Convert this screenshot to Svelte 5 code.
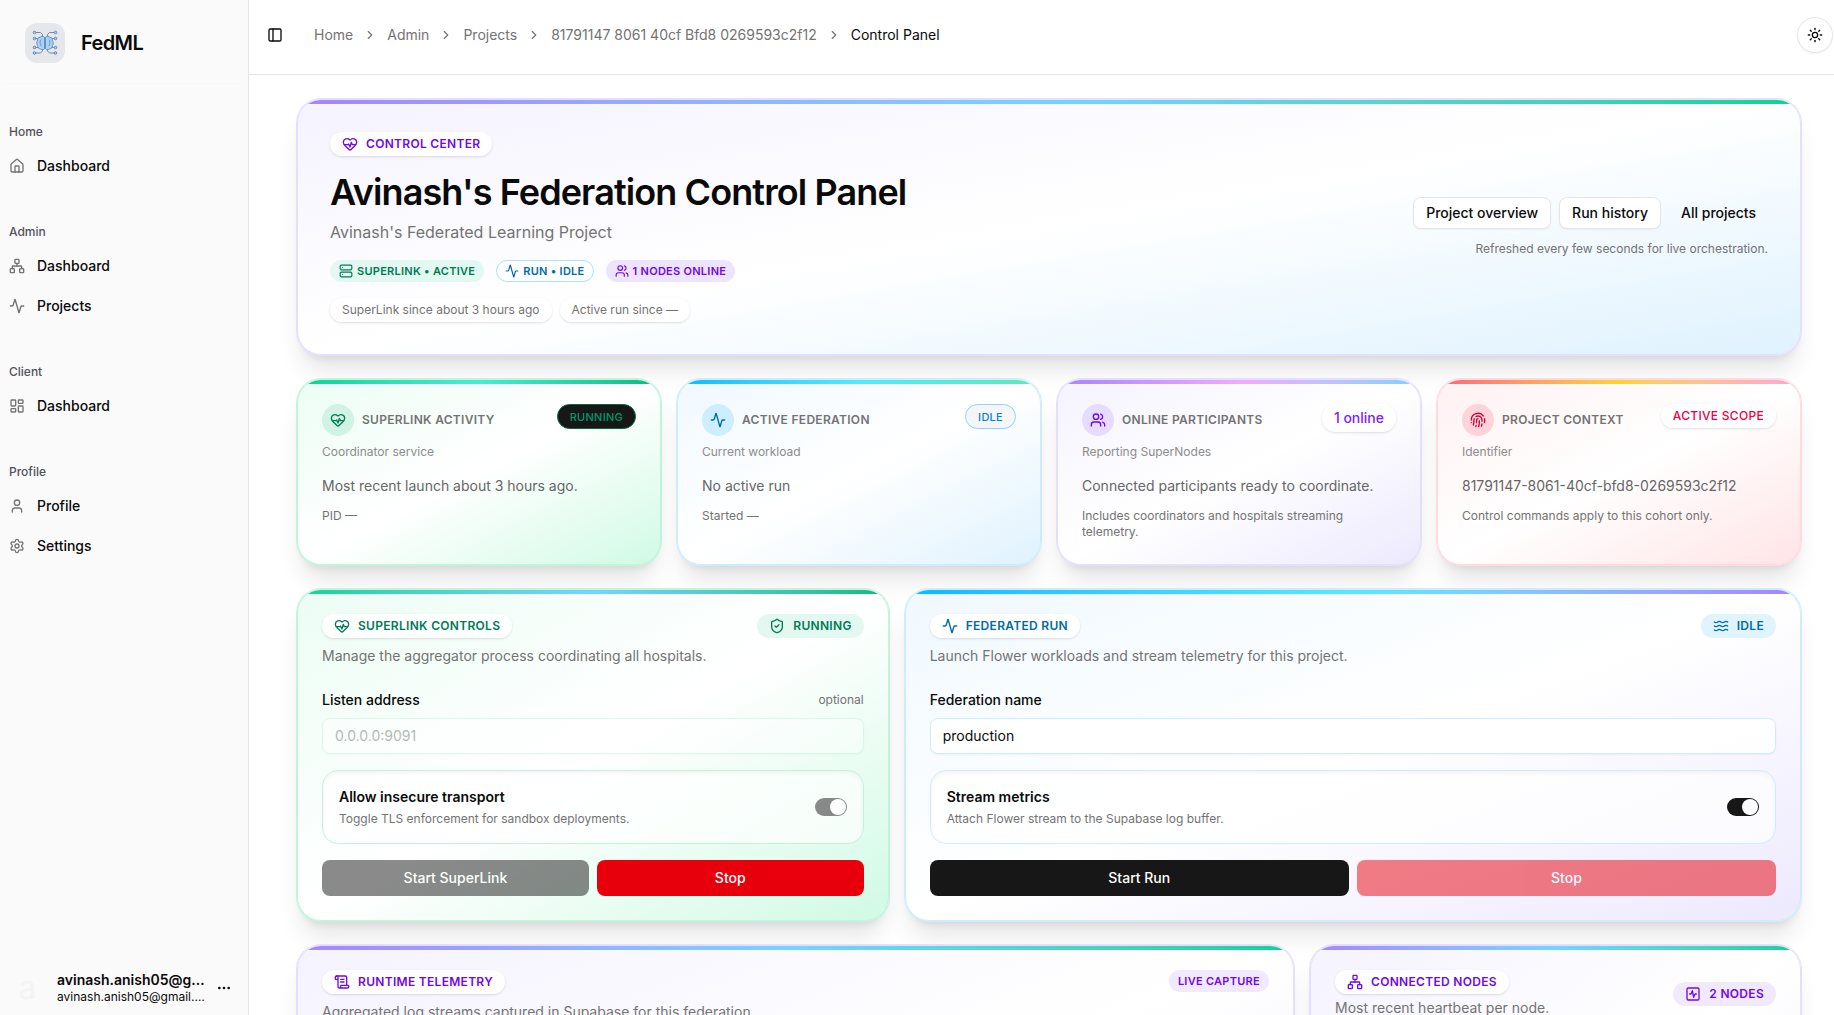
<script>
  const icons = {
    house: ['M15 21v-8a1 1 0 0 0-1-1h-4a1 1 0 0 0-1 1v8', 'M3 10a2 2 0 0 1 .709-1.528l7-6a2 2 0 0 1 2.582 0l7 6A2 2 0 0 1 21 10v9a2 2 0 0 1-2 2H5a2 2 0 0 1-2-2z'],
    network: ['M17 16h4a1 1 0 0 1 1 1v4a1 1 0 0 1-1 1h-4a1 1 0 0 1-1-1v-4a1 1 0 0 1 1-1z', 'M3 16h4a1 1 0 0 1 1 1v4a1 1 0 0 1-1 1H3a1 1 0 0 1-1-1v-4a1 1 0 0 1 1-1z', 'M10 2h4a1 1 0 0 1 1 1v4a1 1 0 0 1-1 1h-4a1 1 0 0 1-1-1V3a1 1 0 0 1 1-1z', 'M5 16v-3a1 1 0 0 1 1-1h12a1 1 0 0 1 1 1v3', 'M12 12V8'],
    activity: ['M22 12h-2.48a2 2 0 0 0-1.93 1.46l-2.35 8.36a.25.25 0 0 1-.48 0L9.24 2.18a.25.25 0 0 0-.48 0l-2.35 8.36A2 2 0 0 1 4.49 12H2'],
    layout: ['M4 3h5a1 1 0 0 1 1 1v7a1 1 0 0 1-1 1H4a1 1 0 0 1-1-1V4a1 1 0 0 1 1-1z', 'M15 3h5a1 1 0 0 1 1 1v3a1 1 0 0 1-1 1h-5a1 1 0 0 1-1-1V4a1 1 0 0 1 1-1z', 'M15 12h5a1 1 0 0 1 1 1v7a1 1 0 0 1-1 1h-5a1 1 0 0 1-1-1v-7a1 1 0 0 1 1-1z', 'M4 16h5a1 1 0 0 1 1 1v3a1 1 0 0 1-1 1H4a1 1 0 0 1-1-1v-3a1 1 0 0 1 1-1z'],
    user: ['M19 21v-2a4 4 0 0 0-4-4H9a4 4 0 0 0-4 4v2', 'M8 7a4 4 0 1 0 8 0a4 4 0 1 0-8 0'],
    users: ['M16 21v-2a4 4 0 0 0-4-4H6a4 4 0 0 0-4 4v2', 'M16 3.128a4 4 0 0 1 0 7.744', 'M22 21v-2a4 4 0 0 0-3-3.87', 'M5 7a4 4 0 1 0 8 0a4 4 0 1 0-8 0'],
    settings: ['M9.671 4.136a2.34 2.34 0 0 1 4.659 0 2.34 2.34 0 0 0 3.319 1.915 2.34 2.34 0 0 1 2.33 4.033 2.34 2.34 0 0 0 0 3.831 2.34 2.34 0 0 1-2.33 4.033 2.34 2.34 0 0 0-3.319 1.915 2.34 2.34 0 0 1-4.659 0 2.34 2.34 0 0 0-3.32-1.915 2.34 2.34 0 0 1-2.33-4.033 2.34 2.34 0 0 0 0-3.831A2.34 2.34 0 0 1 6.35 6.051a2.34 2.34 0 0 0 3.319-1.915', 'M9 12a3 3 0 1 0 6 0a3 3 0 1 0-6 0'],
    panel: ['M5 3h14a2 2 0 0 1 2 2v14a2 2 0 0 1-2 2H5a2 2 0 0 1-2-2V5a2 2 0 0 1 2-2z', 'M9 3v18'],
    chevron: ['m9 18 6-6-6-6'],
    sun: ['M8 12a4 4 0 1 0 8 0a4 4 0 1 0-8 0', 'M12 2v2', 'M12 20v2', 'm4.93 4.93 1.41 1.41', 'm17.66 17.66 1.41 1.41', 'M2 12h2', 'M20 12h2', 'm6.34 17.66-1.41 1.41', 'm19.07 4.93-1.41 1.41'],
    heart: ['M2 9.5a5.5 5.5 0 0 1 9.591-3.676.56.56 0 0 0 .818 0A5.49 5.49 0 0 1 22 9.5c0 2.29-1.5 4-3 5.5l-5.492 5.313a2 2 0 0 1-3 .019L5 15c-1.5-1.5-3-3.2-3-5.5', 'M3.22 13H9.5l.5-1 2 4.5 2-7 1.5 3.5h5.27'],
    server: ['M4 2h16a2 2 0 0 1 2 2v4a2 2 0 0 1-2 2H4a2 2 0 0 1-2-2V4a2 2 0 0 1 2-2z', 'M4 14h16a2 2 0 0 1 2 2v4a2 2 0 0 1-2 2H4a2 2 0 0 1-2-2v-4a2 2 0 0 1 2-2z', 'M6 6h.01', 'M6 18h.01'],
    fingerprint: ['M12 10a2 2 0 0 0-2 2c0 1.02-.1 2.51-.26 4', 'M14 13.12c0 2.38 0 6.38-1 8.88', 'M17.29 21.02c.12-.6.43-2.3.5-3.02', 'M2 12a10 10 0 0 1 18-6', 'M2 16h.01', 'M21.8 16c.2-2 .131-5.354 0-6', 'M5 19.5C5.5 18 6 15 6 12a6 6 0 0 1 .34-2', 'M8.65 22c.21-.66.45-1.32.57-2', 'M9 6.8a6 6 0 0 1 9 5.2v2'],
    shield: ['M20 13c0 5-3.5 7.5-7.66 8.95a1 1 0 0 1-.67-.01C7.5 20.5 4 18 4 13V6a1 1 0 0 1 1-1c2 0 4.5-1.2 6.24-2.72a1.17 1.17 0 0 1 1.52 0C14.51 3.81 17 5 19 5a1 1 0 0 1 1 1z', 'm9 12 2 2 4-4'],
    waves: ['M2 6c.6.5 1.2 1 2.5 1C7 7 7 5 9.5 5c2.6 0 2.4 2 5 2 2.5 0 2.5-2 5-2 1.3 0 1.9.5 2.5 1', 'M2 12c.6.5 1.2 1 2.5 1 2.5 0 2.5-2 5-2 2.6 0 2.4 2 5 2 2.5 0 2.5-2 5-2 1.3 0 1.9.5 2.5 1', 'M2 18c.6.5 1.2 1 2.5 1 2.5 0 2.5-2 5-2 2.6 0 2.4 2 5 2 2.5 0 2.5-2 5-2 1.3 0 1.9.5 2.5 1'],
    scroll: ['M15 12h-5', 'M15 8h-5', 'M19 17V5a2 2 0 0 0-2-2H4', 'M8 21h12a2 2 0 0 0 2-2v-1a1 1 0 0 0-1-1H11a1 1 0 0 0-1 1v1a2 2 0 1 1-4 0V5a2 2 0 1 0-4 0v2a1 1 0 0 0 1 1h3'],
    squareActivity: ['M5 3h14a2 2 0 0 1 2 2v14a2 2 0 0 1-2 2H5a2 2 0 0 1-2-2V5a2 2 0 0 1 2-2z', 'M17 12h-2l-2 5-2-10-2 5H7'],
    dots: ['M11 12a1 1 0 1 0 2 0a1 1 0 1 0-2 0', 'M18 12a1 1 0 1 0 2 0a1 1 0 1 0-2 0', 'M4 12a1 1 0 1 0 2 0a1 1 0 1 0-2 0']
  };

  const nav = [
    { label: 'Home', items: [['house', 'Dashboard']] },
    { label: 'Admin', items: [['network', 'Dashboard'], ['activity', 'Projects']] },
    { label: 'Client', items: [['layout', 'Dashboard']] },
    { label: 'Profile', items: [['user', 'Profile'], ['settings', 'Settings']] }
  ];

  const crumbs = ['Home', 'Admin', 'Projects', '81791147 8061 40cf Bfd8 0269593c2f12'];

  const stats = [
    { tone: 'emerald', icon: 'heart', title: 'SUPERLINK ACTIVITY', sub: 'Coordinator service', badge: 'RUNNING', kind: 'running', text: 'Most recent launch about 3 hours ago.', note: 'PID —' },
    { tone: 'sky', icon: 'activity', title: 'ACTIVE FEDERATION', sub: 'Current workload', badge: 'IDLE', kind: 'idle', text: 'No active run', note: 'Started —' },
    { tone: 'violet', icon: 'users', title: 'ONLINE PARTICIPANTS', sub: 'Reporting SuperNodes', badge: '1 online', kind: 'online', text: 'Connected participants ready to coordinate.', note: 'Includes coordinators and hospitals streaming telemetry.' },
    { tone: 'rose', icon: 'fingerprint', title: 'PROJECT CONTEXT', sub: 'Identifier', badge: 'ACTIVE SCOPE', kind: 'scope', text: '81791147-8061-40cf-bfd8-0269593c2f12', note: 'Control commands apply to this cohort only.' }
  ];
</script>

{#snippet icon(name, size = 16)}
  <svg class="icon" width={size} height={size} viewBox="0 0 24 24">
    {#each icons[name] as d}<path {d} />{/each}
  </svg>
{/snippet}

<div class="app">
  <aside>
    <div class="brand">
      <span class="logo">
        <svg width="26" height="26" viewBox="0 0 26 26">
          <g class="wires">
            <path d="M3 2.5h5.5l2 2V7M2.5 8.500h4M2.500 17.500h4M3 23h5.500l2-2v-2.500M23 2.500h-5.500l-2 2V7M23.500 8.500h-4M23.500 17.500h-4M23 23h-5.500l-2-2v-2.500" />
            <circle cx="2.500" cy="2.500" r="1.300" /><circle cx="2.500" cy="8.500" r="1.300" /><circle cx="2.500" cy="17.500" r="1.300" /><circle cx="2.500" cy="23" r="1.300" />
            <circle cx="23.500" cy="2.500" r="1.300" /><circle cx="23.500" cy="8.500" r="1.300" /><circle cx="23.500" cy="17.500" r="1.300" /><circle cx="23.500" cy="23" r="1.300" />
          </g>
          <path class="lobe" d="M12.500 7.200c-1.500-1.400-3.500-1-4.300.2-2-.2-3 1.400-2.500 2.900-1.300 1.600-1.200 3.800 0 5.200-.3 2 .9 3.400 2.700 3.300 1.100 1.200 3 1.200 4.100 0z" />
          <path class="lobe" d="M13.500 7.200c1.500-1.400 3.500-1 4.300.2 2-.2 3 1.400 2.500 2.900 1.300 1.600 1.200 3.800 0 5.200.3 2-.9 3.400-2.700 3.300-1.100 1.200-3 1.200-4.100 0z" />
          <path class="folds" d="M9 9.500c-1.300 1.500-1.300 4.500.3 6.500M17 9.500c1.300 1.500 1.300 4.500-.3 6.500" />
        </svg>
      </span>
      <strong>FedML</strong>
    </div>
    <nav>
      {#each nav as group}
        <section>
          <h4>{group.label}</h4>
          {#each group.items as [name, text]}
            <a href="#top">{@render icon(name)}<span>{text}</span></a>
          {/each}
        </section>
      {/each}
    </nav>
    <div class="account">
      <span class="avatar">a</span>
      <div class="who">
        <b>avinash.anish05@gmail.com</b>
        <small>avinash.anish05@gmail.com</small>
      </div>
      {@render icon('dots')}
    </div>
  </aside>

  <div class="page">
    <header>
      <span class="trigger">{@render icon('panel')}</span>
      <div class="crumbs">
        {#each crumbs as c}<span>{c}</span>{@render icon('chevron', 14)}{/each}
        <span class="current">Control Panel</span>
      </div>
      <button class="theme" aria-label="Toggle theme">{@render icon('sun')}</button>
    </header>

    <main>
      <div class="card hero">
        <i class="bar"></i>
        <div>
          <span class="pill violet-text">{@render icon('heart')}CONTROL CENTER</span>
          <h1>Avinash's Federation Control Panel</h1>
          <p class="lead">Avinash's Federated Learning Project</p>
          <div class="badges">
            <span class="badge green">{@render icon('server', 14)}SUPERLINK • ACTIVE</span>
            <span class="badge blue">{@render icon('activity', 14)}RUN • IDLE</span>
            <span class="badge purple">{@render icon('users', 14)}1 NODES ONLINE</span>
          </div>
          <div class="chips">
            <span>SuperLink since about 3 hours ago</span>
            <span>Active run since —</span>
          </div>
        </div>
        <div class="hero-side">
          <div class="links">
            <button class="outline">Project overview</button>
            <button class="outline">Run history</button>
            <button class="ghost">All projects</button>
          </div>
          <small>Refreshed every few seconds for live orchestration.</small>
        </div>
      </div>

      <div class="stats">
        {#each stats as s}
          <div class="card stat {s.tone}">
            <i class="bar"></i>
            <div class="stat-head">
              <span class="dot">{@render icon(s.icon)}</span>
              <h3>{s.title}</h3>
              <span class="state {s.kind}">{s.badge}</span>
            </div>
            <p class="sub">{s.sub}</p>
            <p class="text">{s.text}</p>
            <p class="note">{s.note}</p>
          </div>
        {/each}
      </div>

      <div class="controls">
        <div class="card panel link">
          <i class="bar"></i>
          <div class="panel-head">
            <span class="pill green-text">{@render icon('heart')}SUPERLINK CONTROLS</span>
            <span class="pill flat green">{@render icon('shield')}RUNNING</span>
          </div>
          <p class="desc">Manage the aggregator process coordinating all hospitals.</p>
          <div class="label"><span>Listen address</span><small>optional</small></div>
          <div class="input disabled">0.0.0.0:9091</div>
          <div class="option">
            <div><b>Allow insecure transport</b><small>Toggle TLS enforcement for sandbox deployments.</small></div>
            <span class="switch disabled"></span>
          </div>
          <div class="actions">
            <button class="primary disabled">Start SuperLink</button>
            <button class="danger">Stop</button>
          </div>
        </div>

        <div class="card panel run">
          <i class="bar"></i>
          <div class="panel-head">
            <span class="pill blue-text">{@render icon('activity')}FEDERATED RUN</span>
            <span class="pill flat blue">{@render icon('waves')}IDLE</span>
          </div>
          <p class="desc">Launch Flower workloads and stream telemetry for this project.</p>
          <div class="label"><span>Federation name</span></div>
          <div class="input">production</div>
          <div class="option">
            <div><b>Stream metrics</b><small>Attach Flower stream to the Supabase log buffer.</small></div>
            <span class="switch"></span>
          </div>
          <div class="actions">
            <button class="primary">Start Run</button>
            <button class="danger disabled">Stop</button>
          </div>
        </div>
      </div>

      <div class="bottom">
        <div class="card panel telemetry">
          <i class="bar"></i>
          <div class="panel-head">
            <span class="pill violet-text">{@render icon('scroll')}RUNTIME TELEMETRY</span>
            <span class="badge purple light">LIVE CAPTURE</span>
          </div>
          <p class="desc">Aggregated log streams captured in Supabase for this federation.</p>
        </div>
        <div class="card panel nodes">
          <i class="bar"></i>
          <div class="nodes-head">
            <div>
              <span class="pill violet-text">{@render icon('network')}CONNECTED NODES</span>
              <p class="desc">Most recent heartbeat per node.</p>
            </div>
            <span class="pill flat purple">{@render icon('squareActivity')}2 NODES</span>
          </div>
        </div>
      </div>
    </main>
  </div>
</div>

<style>
  :global(body) { overflow: hidden; background: #fff; }
  * { box-sizing: border-box; }
  .app {
    display: flex;
    height: 1015px;
    overflow: hidden;
    font-family: Inter, 'Liberation Sans', sans-serif;
    font-size: 14px;
    line-height: 20px;
    color: #0a0a0a;
  }
  h1, h3, h4, p { margin: 0; }
  small { font-size: 12px; line-height: 16px; color: #737373; }
  button { font: inherit; border: 0; padding: 0; color: inherit; }
  .icon { fill: none; stroke: currentColor; stroke-width: 2; stroke-linecap: round; stroke-linejoin: round; flex: none; }

  aside { width: 249px; flex: none; background: #fafafa; border-right: 1px solid #e5e5e5; display: flex; flex-direction: column; }
  .brand { display: flex; align-items: center; gap: 16px; height: 84px; margin: 0 8px 0 3px; padding: 2px 22px 0; border-bottom: 1px solid #f7f7f7; }
  .logo { width: 40px; height: 40px; border-radius: 12px; background: #e5e7eb; display: grid; place-items: center; }
  .wires { fill: #b4cdea; stroke: #5f7fa8; stroke-width: .9; }
  .wires path { fill: none; }
  .lobe { fill: #a8d2f8; stroke: #5b87b8; stroke-width: .9; }
  .folds { fill: none; stroke: #5b87b8; stroke-width: .8; }
  .brand strong { font-size: 20px; line-height: 28px; font-weight: 600; letter-spacing: -.6px; }
  nav { padding-top: 32px; flex: 1; }
  section { padding: 0 9px; margin-bottom: 30px; }
  h4 { height: 32px; line-height: 32px; font-size: 12px; font-weight: 500; color: #52525b; margin-bottom: -2px; }
  nav a { display: flex; align-items: center; gap: 12px; height: 40px; color: #0a0a0a; text-decoration: none; font-weight: 500; }
  nav a .icon { color: #737373; }
  .account { display: flex; align-items: center; height: 54px; padding: 0 16px 0 12px; }
  .avatar { width: 32px; text-align: center; font-size: 32px; color: #f4f4f4; }
  .who { flex: none; width: 150px; margin: 0 9px 1px 14px; display: grid; }
  .who b { font-weight: 600; line-height: 17px; }
  .who small { color: #0a0a0a; line-height: 17px; }
  .who > * { overflow: hidden; text-overflow: ellipsis; white-space: nowrap; }

  .page { flex: 1; min-width: 0; display: flex; flex-direction: column; }
  header { height: 75px; flex: none; border-bottom: 1px solid #e5e5e5; padding: 0 1px 5px 18px; display: flex; align-items: center; }
  .trigger { display: flex; margin-right: 31px; }
  .crumbs { display: flex; align-items: center; gap: 10px; flex: 1; color: #737373; }
  .crumbs .current { color: #0a0a0a; }
  .theme { width: 36px; height: 36px; border-radius: 50%; border: 1px solid #e5e5e5; background: #fff; display: grid; place-items: center; box-shadow: 0 1px 2px rgb(0 0 0 / .05); }

  main { padding: 24px 33px 24px 48px; display: grid; gap: 24px; align-content: start; flex: 1; min-height: 0; }
  .card {
    position: relative;
    overflow: hidden;
    border-radius: 24px;
    border: 1px solid var(--line);
    padding: 24px;
    background: linear-gradient(to bottom right in oklab, var(--from), #fff, var(--to)) border-box;
    box-shadow: 0 0 0 1px var(--line), 0 20px 25px -5px rgb(0 0 0 / .1), 0 8px 10px -6px rgb(0 0 0 / .1);
  }
  .bar { position: absolute; top: 0; left: 0; right: 0; height: 4px; background: linear-gradient(to right in oklab, var(--a), var(--b), var(--c)); }
  .hero, .telemetry, .nodes, .violet { --line: #e5dfff; --from: #f5f3ff; --to: #ede9fe; --a: #a684ff; --b: #74d4ff; --c: #00d492; }
  .hero { --to: #dff2fe; }
  .emerald, .link { --line: #c0f4dc; --from: #ecfdf5; --to: #d0fae5; --a: #00d492; --b: #46ecd5; --c: #00bc7d; }
  .link { --b: #74d4ff; }
  .sky, .run { --line: #cdedfe; --from: #f0f9ff; --to: #dff2fe; --a: #00bcff; --b: #53eafd; --c: #5ee9b5; }
  .run { --to: #ede9fe; --c: #a684ff; }
  .violet { --b: #f4a8ff; --c: #74d4ff; }
  .rose { --line: #ffdbe0; --from: #fff1f2; --to: #ffe4e6; --a: #ff637e; --b: #ffd230; --c: #fda5d5; }

  .hero { padding: 32px; height: 256px; display: flex; align-items: center; justify-content: space-between; }
  .pill { display: inline-flex; align-items: center; gap: 8px; height: 24px; padding: 0 12px; border-radius: 12px; font-size: 12px; line-height: 16px; font-weight: 600; letter-spacing: .3px; background: rgb(255 255 255 / .9); box-shadow: 0 1px 3px rgb(0 0 0 / .1), 0 1px 2px -1px rgb(0 0 0 / .1); white-space: nowrap; }
  .pill.flat { box-shadow: none; }
  .violet-text { color: #7008e7; }
  .green-text { color: #007a55; }
  .blue-text { color: #0069a8; }
  .green, .pill.green { color: #007a55; background: #e3f8f1; }
  .blue, .pill.blue { color: #0069a8; background: #e0f4fe; }
  .purple { color: #7008e7; background: #ede4ff; }
  .pill.purple, .badge.light { background: #f1eafe; }
  h1 { margin-top: 12px; font-size: 36px; line-height: 40px; font-weight: 600; letter-spacing: -.9px; }
  .hero .pill { vertical-align: top; margin-bottom: 4px; }
  .lead { margin-top: 8px; font-size: 16px; line-height: 24px; color: #737373; }
  .badges { display: flex; gap: 12px; margin-top: 16px; }
  .badge { display: inline-flex; align-items: center; gap: 4px; height: 22px; padding: 0 8px; border: 1px solid transparent; border-radius: 11px; font-size: 11px; line-height: 18px; padding-bottom: 1px; font-weight: 600; letter-spacing: .275px; white-space: nowrap; }
  .badge.blue { background: #fff; border-color: #a9e1fe; }
  .chips { display: flex; gap: 8px; margin-top: 16px; }
  .chips span { height: 24px; line-height: 24px; padding: 0 12px; border-radius: 12px; font-size: 12px; color: #737373; background: rgb(255 255 255 / .8); box-shadow: 0 1px 3px rgb(0 0 0 / .1), 0 1px 2px -1px rgb(0 0 0 / .1); }
  .hero-side { display: grid; gap: 12px; justify-items: end; }
  .links { display: flex; gap: 8px; font-weight: 500; }
  .links button { height: 32px; padding: 0 12px; border-radius: 8px; background: transparent; }
  .links .outline { background: #fff; border: 1px solid #e5e5e5; box-shadow: 0 1px 2px rgb(0 0 0 / .05); }

  .stats { display: grid; grid-template-columns: repeat(4, 1fr); gap: 16px; }
  .stat { height: 186px; }
  .stat-head { display: flex; gap: 8px; align-items: center; height: 32px; }
  .dot { width: 32px; height: 32px; border-radius: 50%; display: grid; place-items: center; }
  .emerald .dot { background: #d0f3e6; color: #007a55; }
  .sky .dot { background: #cdeefe; color: #0069a8; }
  .violet .dot { background: #e6dcff; color: #7008e7; }
  .rose .dot { background: #ffd3da; color: #c70036; }
  h3 { flex: 1; font-size: 12px; line-height: 16px; font-weight: 600; letter-spacing: .3px; color: #737373; }
  .state { align-self: flex-start; height: 25px; display: flex; align-items: center; padding: 0 12px; border: 1px solid transparent; border-radius: 14px; font-size: 11px; line-height: 16px; font-weight: 500; letter-spacing: .275px; white-space: nowrap; }
  .running { background: #171717; border-color: #06683f; color: #009966; }
  .idle { background: #f5f5f5; border-color: #8bd5fb; color: #0084d1; }
  .online, .scope { background: rgb(255 255 255 / .9); border: 0; box-shadow: 0 1px 3px rgb(0 0 0 / .1), 0 1px 2px -1px rgb(0 0 0 / .1); }
  .online { height: 28px; font-size: 14px; letter-spacing: 0; color: #7f22fe; }
  .scope { color: #ec003f; height: 24px; font-size: 12px; letter-spacing: .3px; }
  .sub { margin-top: 8px; font-size: 12px; line-height: 16px; color: #8c8c8c; }
  .text { margin-top: 16px; color: #666; }
  .note { margin-top: 12px; font-size: 12px; line-height: 16px; color: #737373; }

  .controls { display: grid; grid-template-columns: 591.700px 1fr; gap: 16px; }
  .panel-head { display: flex; justify-content: space-between; align-items: flex-start; }
  .desc { margin-top: 8px; color: #737373; }
  .label { display: flex; justify-content: space-between; align-items: center; margin-top: 24px; font-weight: 500; }
  .label small { font-weight: 400; }
  .input { margin-top: 8px; height: 36px; line-height: 34px; padding: 0 12px; border: 1px solid var(--line); border-radius: 8px; background: rgb(255 255 255 / .9); box-shadow: 0 1px 2px rgb(0 0 0 / .05); }
  .input.disabled { color: #737373; }
  .disabled { opacity: .5; }
  .option { margin-top: 16px; height: 74px; padding: 0 16px; border: 1px solid var(--line); border-radius: 16px; background: rgb(255 255 255 / .7); box-shadow: inset 0 2px 4px rgb(0 0 0 / .05); display: flex; align-items: center; justify-content: space-between; }
  .option div { display: grid; gap: 4px; }
  .option b { font-weight: 600; }
  .switch { width: 32px; height: 18px; border-radius: 9px; background: #171717; display: flex; justify-content: flex-end; align-items: center; padding: 1px; }
  .switch::after { content: ''; width: 16px; height: 16px; border-radius: 50%; background: #fff; }
  .actions { display: grid; grid-template-columns: 1fr 1fr; gap: 8px; margin-top: 16px; }
  .actions button { height: 36px; border-radius: 8px; color: #fff; font-weight: 500; }
  .primary { background: #171717; }
  .danger { background: #e7000b; }

  .bottom { display: grid; grid-template-columns: 997px 1fr; gap: 16px; }
  .bottom .card { height: 400px; }
  .nodes-head { display: flex; align-items: center; justify-content: space-between; height: 48px; }
  .nodes-head .desc { margin-top: 4px; }
  .nodes-head .violet-text { display: flex; width: fit-content; }
</style>
